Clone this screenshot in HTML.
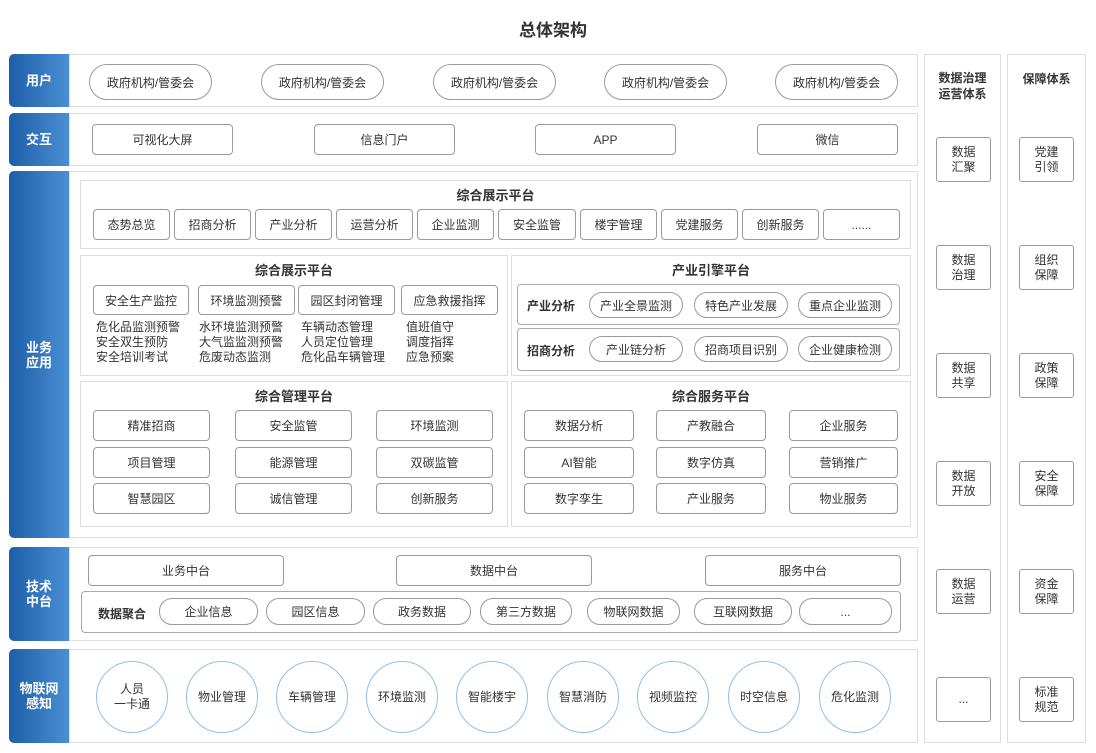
<!DOCTYPE html>
<html><head><meta charset="utf-8"><style>
*{margin:0;padding:0;box-sizing:border-box}
body{width:1096px;height:753px;background:#fff;position:relative;font-family:"Liberation Sans","Noto Sans CJK SC",sans-serif;font-size:12px;color:#333;overflow:hidden}
div{position:absolute}
.b{border:1px solid #9a9a9a;border-radius:4px;display:flex;align-items:center;justify-content:center;background:#fff;white-space:nowrap}
.p{border-radius:16px}
.c{border:1px solid #8cc2ea;border-radius:50%;display:flex;align-items:center;justify-content:center;text-align:center;line-height:15px}
.pn{border:1px solid #ddd;background:#fff}
.lab{left:9px;width:60px;border-radius:5px 0 0 5px;background:linear-gradient(90deg,#1d5ea8,#4a8fd4);color:#fff;font-weight:bold;font-size:13px;display:flex;align-items:center;justify-content:center;text-align:center;line-height:15px}
.t{font-weight:bold;font-size:13px;color:#333;text-align:center;white-space:nowrap}
.txt{line-height:15px;white-space:nowrap}
.r{display:flex;align-items:center;justify-content:center;text-align:center;line-height:15px;border:1px solid #9a9a9a;border-radius:3px;width:55px;height:45px}
</style></head><body>
<div class="t" style="left:0;width:1106px;top:16px;font-size:17px">总体架构</div>

<!-- 用户 -->
<div class="lab" style="top:54px;height:53px">用户</div>
<div class="pn" style="left:69px;top:54px;width:849px;height:53px"></div>
<div class="b p" style="left:89px;top:64px;width:123px;height:36px;border-radius:18px">政府机构/管委会</div>
<div class="b p" style="left:261px;top:64px;width:123px;height:36px;border-radius:18px">政府机构/管委会</div>
<div class="b p" style="left:433px;top:64px;width:123px;height:36px;border-radius:18px">政府机构/管委会</div>
<div class="b p" style="left:604px;top:64px;width:123px;height:36px;border-radius:18px">政府机构/管委会</div>
<div class="b p" style="left:775px;top:64px;width:123px;height:36px;border-radius:18px">政府机构/管委会</div>

<!-- 交互 -->
<div class="lab" style="top:113px;height:53px">交互</div>
<div class="pn" style="left:69px;top:113px;width:849px;height:53px"></div>
<div class="b" style="left:92px;top:124px;width:141px;height:31px">可视化大屏</div>
<div class="b" style="left:314px;top:124px;width:141px;height:31px">信息门户</div>
<div class="b" style="left:535px;top:124px;width:141px;height:31px">APP</div>
<div class="b" style="left:757px;top:124px;width:141px;height:31px">微信</div>

<!-- 业务应用 -->
<div class="lab" style="top:171px;height:367px">业务<br>应用</div>
<div class="pn" style="left:69px;top:171px;width:849px;height:367px"></div>
<div class="pn" style="left:80px;top:180px;width:831px;height:69px"></div>
<div class="t" style="left:80px;width:831px;top:185px">综合展示平台</div>
<div class="b" style="left:93px;top:209px;width:77px;height:31px">态势总览</div>
<div class="b" style="left:174px;top:209px;width:77px;height:31px">招商分析</div>
<div class="b" style="left:255px;top:209px;width:77px;height:31px">产业分析</div>
<div class="b" style="left:336px;top:209px;width:77px;height:31px">运营分析</div>
<div class="b" style="left:417px;top:209px;width:77px;height:31px">企业监测</div>
<div class="b" style="left:498px;top:209px;width:78px;height:31px">安全监管</div>
<div class="b" style="left:580px;top:209px;width:77px;height:31px">楼宇管理</div>
<div class="b" style="left:661px;top:209px;width:77px;height:31px">党建服务</div>
<div class="b" style="left:742px;top:209px;width:77px;height:31px">创新服务</div>
<div class="b" style="left:823px;top:209px;width:77px;height:31px">......</div>

<div class="pn" style="left:80px;top:255px;width:428px;height:121px"></div>
<div class="t" style="left:80px;width:428px;top:260px">综合展示平台</div>
<div class="b" style="left:93px;top:285px;width:96px;height:30px">安全生产监控</div>
<div class="b" style="left:198px;top:285px;width:97px;height:30px">环境监测预警</div>
<div class="b" style="left:298px;top:285px;width:97px;height:30px">园区封闭管理</div>
<div class="b" style="left:401px;top:285px;width:97px;height:30px">应急救援指挥</div>
<div class="txt" style="left:96px;top:320px">危化品监测预警<br>安全双生预防<br>安全培训考试</div>
<div class="txt" style="left:199px;top:320px">水环境监测预警<br>大气监监测预警<br>危废动态监测</div>
<div class="txt" style="left:301px;top:320px">车辆动态管理<br>人员定位管理<br>危化品车辆管理</div>
<div class="txt" style="left:406px;top:320px">值班值守<br>调度指挥<br>应急预案</div>

<div class="pn" style="left:511px;top:255px;width:400px;height:121px"></div>
<div class="t" style="left:511px;width:400px;top:260px">产业引擎平台</div>
<div class="b" style="left:517px;top:284px;width:383px;height:41px;justify-content:flex-start;border-color:#aaa"></div>
<div class="t" style="left:527px;top:297px;font-size:12px">产业分析</div>
<div class="b p" style="left:589px;top:292px;width:94px;height:26px;border-radius:13px">产业全景监测</div>
<div class="b p" style="left:694px;top:292px;width:94px;height:26px;border-radius:13px">特色产业发展</div>
<div class="b p" style="left:798px;top:292px;width:94px;height:26px;border-radius:13px">重点企业监测</div>
<div class="b" style="left:517px;top:328px;width:383px;height:43px;border-color:#aaa"></div>
<div class="t" style="left:527px;top:342px;font-size:12px">招商分析</div>
<div class="b p" style="left:589px;top:336px;width:94px;height:26px;border-radius:13px">产业链分析</div>
<div class="b p" style="left:694px;top:336px;width:94px;height:26px;border-radius:13px">招商项目识别</div>
<div class="b p" style="left:798px;top:336px;width:94px;height:26px;border-radius:13px">企业健康检测</div>

<div class="pn" style="left:80px;top:381px;width:428px;height:146px"></div>
<div class="t" style="left:80px;width:428px;top:386px">综合管理平台</div>
<div class="b" style="left:93px;top:410px;width:117px;height:31px">精准招商</div>
<div class="b" style="left:235px;top:410px;width:117px;height:31px">安全监管</div>
<div class="b" style="left:376px;top:410px;width:117px;height:31px">环境监测</div>
<div class="b" style="left:93px;top:447px;width:117px;height:31px">项目管理</div>
<div class="b" style="left:235px;top:447px;width:117px;height:31px">能源管理</div>
<div class="b" style="left:376px;top:447px;width:117px;height:31px">双碳监管</div>
<div class="b" style="left:93px;top:483px;width:117px;height:31px">智慧园区</div>
<div class="b" style="left:235px;top:483px;width:117px;height:31px">诚信管理</div>
<div class="b" style="left:376px;top:483px;width:117px;height:31px">创新服务</div>

<div class="pn" style="left:511px;top:381px;width:400px;height:146px"></div>
<div class="t" style="left:511px;width:400px;top:386px">综合服务平台</div>
<div class="b" style="left:524px;top:410px;width:110px;height:31px">数据分析</div>
<div class="b" style="left:656px;top:410px;width:110px;height:31px">产教融合</div>
<div class="b" style="left:789px;top:410px;width:109px;height:31px">企业服务</div>
<div class="b" style="left:524px;top:447px;width:110px;height:31px">AI智能</div>
<div class="b" style="left:656px;top:447px;width:110px;height:31px">数字仿真</div>
<div class="b" style="left:789px;top:447px;width:109px;height:31px">营销推广</div>
<div class="b" style="left:524px;top:483px;width:110px;height:31px">数字孪生</div>
<div class="b" style="left:656px;top:483px;width:110px;height:31px">产业服务</div>
<div class="b" style="left:789px;top:483px;width:109px;height:31px">物业服务</div>

<!-- 技术中台 -->
<div class="lab" style="top:547px;height:94px">技术<br>中台</div>
<div class="pn" style="left:69px;top:547px;width:849px;height:94px"></div>
<div class="b" style="left:88px;top:555px;width:196px;height:31px">业务中台</div>
<div class="b" style="left:396px;top:555px;width:196px;height:31px">数据中台</div>
<div class="b" style="left:705px;top:555px;width:196px;height:31px">服务中台</div>
<div class="b" style="left:81px;top:591px;width:820px;height:42px;border-color:#aaa"></div>
<div class="t" style="left:98px;top:605px;font-size:12px">数据聚合</div>
<div class="b p" style="left:159px;top:598px;width:99px;height:27px;border-radius:13px">企业信息</div>
<div class="b p" style="left:266px;top:598px;width:99px;height:27px;border-radius:13px">园区信息</div>
<div class="b p" style="left:373px;top:598px;width:98px;height:27px;border-radius:13px">政务数据</div>
<div class="b p" style="left:480px;top:598px;width:92px;height:27px;border-radius:13px">第三方数据</div>
<div class="b p" style="left:587px;top:598px;width:93px;height:27px;border-radius:13px">物联网数据</div>
<div class="b p" style="left:694px;top:598px;width:98px;height:27px;border-radius:13px">互联网数据</div>
<div class="b p" style="left:799px;top:598px;width:93px;height:27px;border-radius:13px">...</div>

<!-- 物联网感知 -->
<div class="lab" style="top:649px;height:94px">物联网<br>感知</div>
<div class="pn" style="left:69px;top:649px;width:849px;height:94px"></div>
<div class="c" style="left:96px;top:661px;width:72px;height:72px">人员<br>一卡通</div>
<div class="c" style="left:186px;top:661px;width:72px;height:72px">物业管理</div>
<div class="c" style="left:276px;top:661px;width:72px;height:72px">车辆管理</div>
<div class="c" style="left:366px;top:661px;width:72px;height:72px">环境监测</div>
<div class="c" style="left:456px;top:661px;width:72px;height:72px">智能楼宇</div>
<div class="c" style="left:547px;top:661px;width:72px;height:72px">智慧消防</div>
<div class="c" style="left:637px;top:661px;width:72px;height:72px">视频监控</div>
<div class="c" style="left:728px;top:661px;width:72px;height:72px">时空信息</div>
<div class="c" style="left:819px;top:661px;width:72px;height:72px">危化监测</div>

<!-- 右侧 -->
<div class="pn" style="left:924px;top:54px;width:77px;height:689px"></div>
<div class="t" style="left:924px;width:77px;top:70px;font-size:12px;line-height:16px">数据治理<br>运营体系</div>
<div class="r" style="left:936px;top:137px">数据<br>汇聚</div>
<div class="r" style="left:936px;top:245px">数据<br>治理</div>
<div class="r" style="left:936px;top:353px">数据<br>共享</div>
<div class="r" style="left:936px;top:461px">数据<br>开放</div>
<div class="r" style="left:936px;top:569px">数据<br>运营</div>
<div class="r" style="left:936px;top:677px">...</div>

<div class="pn" style="left:1007px;top:54px;width:79px;height:689px"></div>
<div class="t" style="left:1007px;width:79px;top:70px;font-size:12px">保障体系</div>
<div class="r" style="left:1019px;top:137px">党建<br>引领</div>
<div class="r" style="left:1019px;top:245px">组织<br>保障</div>
<div class="r" style="left:1019px;top:353px">政策<br>保障</div>
<div class="r" style="left:1019px;top:461px">安全<br>保障</div>
<div class="r" style="left:1019px;top:569px">资金<br>保障</div>
<div class="r" style="left:1019px;top:677px">标准<br>规范</div>
</body></html>
